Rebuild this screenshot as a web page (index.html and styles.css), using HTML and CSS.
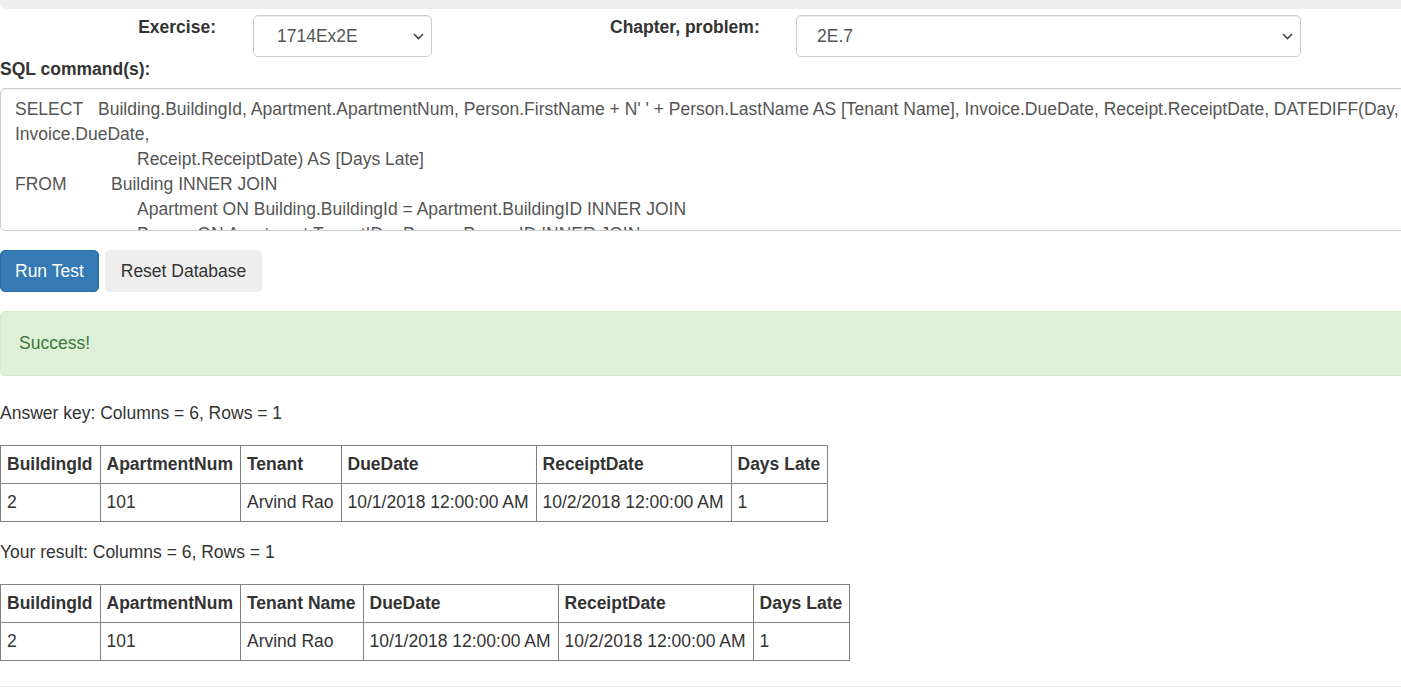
FILE: index.html
```html
<!DOCTYPE html>
<html lang="en">
<head>
<meta charset="utf-8">
<title>SQL Exercise</title>
<link rel="stylesheet" href="styles.css">
</head>
<body>
<div class="topbar"></div>

<div class="selectors">
  <label class="lbl lbl-exercise" for="exercise">Exercise:</label>
  <div class="sel sel-exercise">
    <select id="exercise"><option>1714Ex2E</option></select>
    <svg class="chev" width="11" height="7" viewBox="0 0 11 7"><path d="M1 1 L5.5 5.5 L10 1" fill="none" stroke="#444" stroke-width="1.6"/></svg>
  </div>
  <label class="lbl lbl-chapter" for="chapter">Chapter, problem:</label>
  <div class="sel sel-chapter">
    <select id="chapter"><option>2E.7</option></select>
    <svg class="chev" width="11" height="7" viewBox="0 0 11 7"><path d="M1 1 L5.5 5.5 L10 1" fill="none" stroke="#444" stroke-width="1.6"/></svg>
  </div>
</div>

<div class="sql-label">SQL command(s):</div>
<div class="sql wide">
  <div class="ln"><span class="kw kw-select">SELECT</span>Building.BuildingId, Apartment.ApartmentNum, Person.FirstName + N' ' + Person.LastName AS [Tenant Name], Invoice.DueDate, Receipt.ReceiptDate, DATEDIFF(Day,</div>
  <div class="ln">Invoice.DueDate,</div>
  <div class="ln ind">Receipt.ReceiptDate) AS [Days Late]</div>
  <div class="ln"><span class="kw kw-from">FROM</span>Building INNER JOIN</div>
  <div class="ln ind">Apartment ON Building.BuildingId = Apartment.BuildingID INNER JOIN</div>
  <div class="ln ind">Person ON Apartment.TenantID = Person.PersonID INNER JOIN</div>
  <div class="ln ind">Invoice ON Apartment.ApartmentID = Invoice.ApartmentID INNER JOIN</div>
  <div class="ln ind">Receipt ON Invoice.InvoiceID = Receipt.InvoiceID</div>
</div>

<div class="buttons">
  <button class="btn btn-primary">Run Test</button>
  <button class="btn btn-default">Reset Database</button>
</div>

<div class="alert wide">Success!</div>

<p class="summary">Answer key: Columns = 6, Rows = 1</p>
<table class="result">
  <tr><th>BuildingId</th><th>ApartmentNum</th><th>Tenant</th><th>DueDate</th><th>ReceiptDate</th><th>Days Late</th></tr>
  <tr><td>2</td><td>101</td><td>Arvind Rao</td><td>10/1/2018 12:00:00 AM</td><td>10/2/2018 12:00:00 AM</td><td>1</td></tr>
</table>

<p class="summary">Your result: Columns = 6, Rows = 1</p>
<table class="result">
  <tr><th>BuildingId</th><th>ApartmentNum</th><th>Tenant Name</th><th>DueDate</th><th>ReceiptDate</th><th>Days Late</th></tr>
  <tr><td>2</td><td>101</td><td>Arvind Rao</td><td>10/1/2018 12:00:00 AM</td><td>10/2/2018 12:00:00 AM</td><td>1</td></tr>
</table>

<div class="footer-line"></div>
</body>
</html>
```

FILE: styles.css
```css
html, body {
  margin: 0;
  padding: 0;
  overflow: hidden;
}
body {
  font-family: "Liberation Sans", Arial, sans-serif;
  font-size: 17.5px;
  line-height: 25px;
  color: #333;
  background: #fff;
}
.wide {
  margin-right: -12px;
}
.topbar {
  height: 9px;
  background: #eee;
  border-radius: 0 0 0 8px;
  margin-right: -12px;
}
.selectors {
  display: flex;
  align-items: flex-start;
  margin-top: 6px;
}
.lbl {
  font-weight: bold;
  line-height: 25px;
  flex-shrink: 0;
}
.lbl-exercise {
  width: 216px;
  text-align: right;
}
.lbl-chapter {
  width: 186px;
  margin-left: 178px;
}
.sel {
  position: relative;
  flex-shrink: 0;
}
.sel-exercise {
  width: 179px;
  margin-left: 37px;
}
.sel-chapter {
  width: 505px;
}
.sel select {
  -webkit-appearance: none;
  appearance: none;
  display: block;
  width: 100%;
  height: 42px;
  box-sizing: border-box;
  border: 1px solid #ccc;
  border-radius: 5px;
  background: #fff;
  font-family: "Liberation Sans", Arial, sans-serif;
  font-size: 17.5px;
  color: #555;
  padding: 0 30px 0 23px;
  margin: 0;
  box-shadow: inset 0 1px 1px rgba(0,0,0,0.075);
}
.sel-chapter select {
  padding-left: 20px;
}
.chev {
  position: absolute;
  right: 8px;
  top: 18px;
}
.sql-label {
  font-weight: bold;
  line-height: 25px;
  margin-bottom: 6px;
}
.sql {
  box-sizing: border-box;
  height: 143px;
  border: 1px solid #ccc;
  border-radius: 5px 0 0 5px;
  padding: 8px 14px;
  color: #555;
  overflow: hidden;
  box-shadow: inset 0 1px 1px rgba(0,0,0,0.075);
}
.ln {
  white-space: nowrap;
  height: 25px;
}
.kw {
  display: inline-block;
}
.kw-select {
  width: 83px;
}
.kw-from {
  width: 96px;
}
.ind {
  padding-left: 122px;
}
.buttons {
  display: flex;
  gap: 6px;
  margin-top: 19px;
}
.btn {
  height: 42px;
  padding: 0 15px;
  font-family: "Liberation Sans", Arial, sans-serif;
  font-size: 17.5px;
  border-radius: 5px;
  border: 1px solid transparent;
  cursor: pointer;
}
.btn-primary {
  padding: 0 14px;
  background: #337ab7;
  border-color: #2e6da4;
  color: #fff;
}
.btn-default {
  background: #eee;
  border-color: #eee;
  color: #333;
}
.alert {
  margin-top: 19px;
  padding: 19px 18px;
  background: #dff0d8;
  border: 1px solid #d6e9c6;
  border-radius: 5px 0 0 5px;
  color: #3c763d;
}
.summary {
  margin: 25px 0 19px;
}
.result + .summary {
  margin-top: 18px;
}
.result {
  border-collapse: collapse;
  border: 1px solid #808080;
}
.result th, .result td {
  border: 1px solid #808080;
  padding: 6px 7px 6px 6px;
  text-align: left;
  white-space: nowrap;
  line-height: 25px;
}
.result th {
  font-weight: bold;
}
.footer-line {
  margin-top: 25px;
  margin-right: -12px;
  border-top: 1px solid #eee;
  height: 10px;
}
```
